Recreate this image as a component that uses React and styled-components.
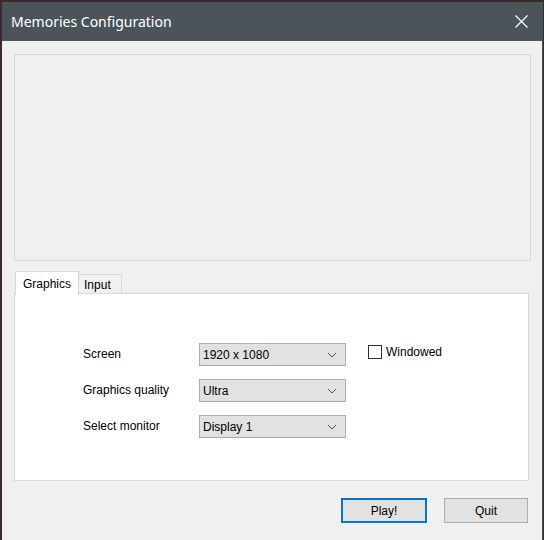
import styled, { createGlobalStyle } from "styled-components";

const GlobalStyle = createGlobalStyle`
  html, body {
    margin: 0;
    padding: 0;
    width: 544px;
    height: 540px;
    overflow: hidden;
    background: #3a2a2c;
  }
  * { box-sizing: border-box; }
`;

const Window = styled.div`
  margin: 2px 1px 0 2px;
  width: 541px;
  height: 538px;
  display: flex;
  flex-direction: column;
  border-right: 1px solid #4b545b;
  font-family: "Liberation Sans", Arial, sans-serif;
  font-size: 12px;
  color: #000;
`;

const TitleBar = styled.div`
  height: 39px;
  background: #4b545b;
  display: flex;
  align-items: center;
  justify-content: space-between;
  padding: 0 14px 1px 9px;
  color: #fff;
  font-family: "Noto Sans", "Open Sans", sans-serif;
  font-size: 14px;
`;

const Body = styled.div`
  flex: 1;
  background: #f0f0f0;
  padding: 13px 0 0 12px;
  display: flex;
  flex-direction: column;
`;

const Preview = styled.div`
  width: 517px;
  height: 207px;
  border: 1px solid #dadada;
  background: #f0f0f0;
`;

const TabStrip = styled.div`
  display: flex;
  align-items: flex-end;
  margin-top: 10px;
  padding-left: 1px;
  position: relative;
  z-index: 1;
`;

const Tab = styled.div`
  height: ${(p) => (p.$active ? 24 : 20)}px;
  padding: ${(p) => (p.$active ? "0 7px" : "1px 10px 0 5px")};
  display: flex;
  align-items: center;
  background: ${(p) => (p.$active ? "#fff" : "#f0f0f0")};
  border: 1px solid #d9d9d9;
  border-bottom: ${(p) => (p.$active ? "none" : "1px solid #d9d9d9")};
  border-left: ${(p) => (p.$active ? "1px solid #d9d9d9" : "none")};
  margin-bottom: ${(p) => (p.$active ? -1 : 0)}px;
`;

const Panel = styled.div`
  width: 515px;
  height: 188px;
  margin-top: -1px;
  background: #fff;
  border: 1px solid #d9d9d9;
  padding: 49px 0 0 68px;
`;

const Form = styled.div`
  display: grid;
  grid-template-columns: 116px 147px auto;
  row-gap: 13px;
  align-items: center;
`;

const Label = styled.div`
  margin-top: -2px;
`;

const Combo = styled.div`
  height: 23px;
  background: #e1e1e1;
  border: 1px solid #adadad;
  display: flex;
  align-items: center;
  justify-content: space-between;
  padding: 0 8px 0 3px;
`;

const Check = styled.label`
  display: flex;
  align-items: center;
  gap: 4px;
  margin-left: 22px;
  align-self: start;
  line-height: 15px;
`;

const Box = styled.span`
  width: 14px;
  height: 14px;
  border: 1px solid #333;
  background: #fff;
`;

const CheckText = styled.span`
  padding-top: 2px;
`;

const Buttons = styled.div`
  display: flex;
  justify-content: flex-end;
  gap: 17px;
  margin-top: 17px;
  padding-right: 14px;
`;

const Button = styled.div`
  width: ${(p) => p.$w}px;
  height: 25px;
  display: flex;
  align-items: center;
  justify-content: center;
  background: #e1e1e1;
  border: ${(p) => (p.$default ? "2px solid #0078d7" : "1px solid #adadad")};
`;

const Chevron = () => (
  <svg width="10" height="6" viewBox="0 0 10 6">
    <path d="M1 1l4 4 4-4" fill="none" stroke="#555" strokeWidth="1" />
  </svg>
);

const Close = () => (
  <svg width="13" height="13" viewBox="0 0 13 13">
    <path d="M0.5 0.5l12 12M12.5 0.5l-12 12" stroke="#fff" strokeWidth="1.2" />
  </svg>
);

export default function App() {
  return (
    <>
      <GlobalStyle />
      <Window>
        <TitleBar>
          <span>Memories Configuration</span>
          <Close />
        </TitleBar>
        <Body>
          <Preview />
          <TabStrip>
            <Tab $active>Graphics</Tab>
            <Tab>Input</Tab>
          </TabStrip>
          <Panel>
            <Form>
              <Label>Screen</Label>
              <Combo>
                1920 x 1080
                <Chevron />
              </Combo>
              <Check>
                <Box />
                <CheckText>Windowed</CheckText>
              </Check>
              <Label>Graphics quality</Label>
              <Combo>
                Ultra
                <Chevron />
              </Combo>
              <span />
              <Label>Select monitor</Label>
              <Combo>
                Display 1
                <Chevron />
              </Combo>
              <span />
            </Form>
          </Panel>
          <Buttons>
            <Button $w={86} $default>Play!</Button>
            <Button $w={84}>Quit</Button>
          </Buttons>
        </Body>
      </Window>
    </>
  );
}
